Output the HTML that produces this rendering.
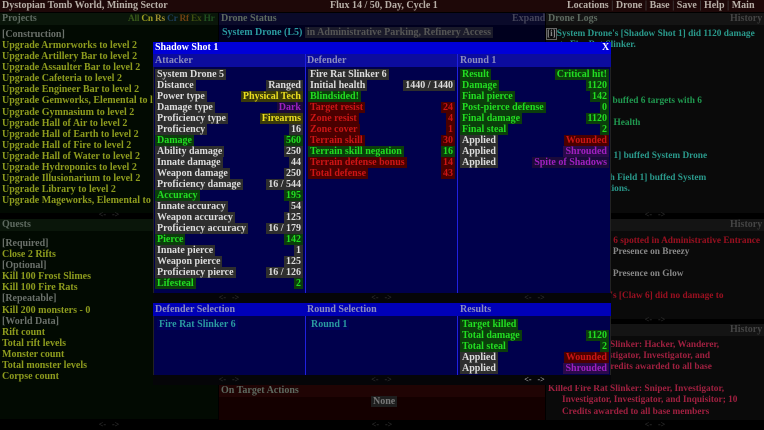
<!DOCTYPE html>
<html><head><meta charset="utf-8"><style>
*{margin:0;padding:0;box-sizing:border-box}
body{width:764px;height:430px;background:#000;overflow:hidden;position:relative;font-family:"Liberation Serif",serif;font-weight:bold;font-size:10px;line-height:11px}
.a{position:absolute;white-space:nowrap}
.g{color:#8e9c1e}
.t{color:#2a9a8c}
.gr{color:#6a706a}
.r{color:#9a1020}
.lg{color:#209a50}
.w{color:#888}
.hd{position:absolute;height:12px;color:#5e6a60;padding-left:2px;line-height:12px}
.nav{position:absolute;height:10px;font-size:8px;color:#333;text-align:center;line-height:10px}
.row{position:absolute;height:11px;line-height:11px}
.row span{padding:0 2px}
.l{background:#2e2e2e;color:#ddd}
.v{position:absolute;right:0;top:0}
.gl{background:#0b3e0b;color:#22dd22}
.rl{background:#4a0000;color:#cc1515}
.yl{background:#3a3a0a;color:#ecdf20}
.pu{color:#a020c0}
.mh{position:absolute;height:13px;line-height:13px;color:#8c8cc0;background:#0e0ea0;padding-left:2px}
.lgs{font-size:9.3px}
</style></head><body>
<!-- top bar -->
<div class="a" style="left:0;top:0;width:764px;height:12px;background:#1e0808"></div>
<div class="a" style="left:2px;top:0;color:#b8b0a8;line-height:12px">Dystopian Tomb World, Mining Sector</div>
<div class="a" style="left:330px;top:0;color:#b8b0a8;line-height:12px">Flux 14 / 50, Day, Cycle 1</div>
<div class="a" style="left:567px;top:0;color:#b8b0a8;line-height:12px">Locations <span style="color:#444">|</span> Drone <span style="color:#444">|</span> Base <span style="color:#444">|</span> Save <span style="color:#444">|</span> Help <span style="color:#444">|</span> Main</div>

<!-- projects panel -->
<div class="a" style="left:0;top:13px;width:218px;height:200px;background:#020a02"></div>
<div class="hd" style="left:0;top:13px;width:218px;background:#0a160a">Projects</div>
<div class="a" style="left:128px;top:13px;line-height:12px;font-size:9.3px;letter-spacing:-0.2px"><span style="color:#3a5a1a">All</span> <span style="color:#a0a020">Cn</span> <span style="color:#a09030">Rs</span> <span style="color:#204060">Cr</span> <span style="color:#704010">Rf</span> <span style="color:#405010">Ex</span> <span style="color:#205020">Hr</span></div>
<div class="a gr" style="left:2px;top:29px">[Construction]</div>
<div class="a g" style="left:2px;top:40px;line-height:11.1px">Upgrade Armorworks to level 2<br>Upgrade Artillery Bar to level 2<br>Upgrade Assaulter Bar to level 2<br>Upgrade Cafeteria to level 2<br>Upgrade Engineer Bar to level 2<br>Upgrade Gemworks, Elemental to level 2<br>Upgrade Gymnasium to level 2<br>Upgrade Hall of Air to level 2<br>Upgrade Hall of Earth to level 2<br>Upgrade Hall of Fire to level 2<br>Upgrade Hall of Water to level 2<br>Upgrade Hydroponics to level 2<br>Upgrade Illusionarium to level 2<br>Upgrade Library to level 2<br>Upgrade Mageworks, Elemental to level 2</div>
<div class="nav" style="left:0;top:210px;width:218px">&lt;- &nbsp; -&gt;</div>

<!-- quests -->
<div class="a" style="left:0;top:219px;width:218px;height:200px;background:#020a02"></div>
<div class="hd" style="left:0;top:219px;width:218px;background:#0a160a">Quests</div>
<div class="a" style="left:2px;top:238px;line-height:11.1px"><span class="gr">[Required]</span><br><span class="g">Close 2 Rifts</span><br><span class="gr">[Optional]</span><br><span class="g">Kill 100 Frost Slimes</span><br><span class="g">Kill 100 Fire Rats</span><br><span class="gr">[Repeatable]</span><br><span class="g">Kill 200 monsters - 0</span><br><span class="gr">[World Data]</span><br><span class="g">Rift count</span><br><span class="g">Total rift levels</span><br><span class="g">Monster count</span><br><span class="g">Total monster levels</span><br><span class="g">Corpse count</span></div>
<div class="nav" style="left:0;top:420px;width:218px">&lt;- &nbsp; -&gt;</div>

<!-- drone status -->
<div class="a" style="left:219px;top:13px;width:326px;height:372px;background:#00001e"></div>
<div class="hd" style="left:219px;top:13px;width:326px;background:#0a0a2a">Drone Status</div>
<div class="a" style="left:512px;top:13px;color:#44445a;line-height:12px">Expand</div>
<div class="a" style="left:222px;top:27px;color:#2a9aa0">System Drone (L5) <span style="background:#1a1a2a;color:#555;padding:0 2px">in Administrative Parking, Refinery Access</span></div>

<!-- on target actions -->
<div class="a" style="left:219px;top:385px;width:326px;height:35px;background:#140000"></div>
<div class="hd" style="left:219px;top:385px;width:326px;background:#200404">On Target Actions</div>
<div class="a" style="left:371px;top:396px;background:#1e1e1e;color:#777;padding:0 2px">None</div>
<div class="nav" style="left:219px;top:420px;width:326px">&lt;- &nbsp; -&gt;</div>

<!-- drone logs -->
<div class="a" style="left:546px;top:13px;width:218px;height:200px;background:#0a0a0a"></div>
<div class="hd" style="left:546px;top:13px;width:218px;background:#141414">Drone Logs</div>
<div class="a" style="left:730px;top:13px;color:#444;line-height:12px">History</div>
<div class="a lgs" style="left:546px;top:29px;line-height:11.1px"><span class="t"><span style="border:1px solid #666;color:#888">[i]</span>System Drone's [Shadow Shot 1] did 1120 damage</span><br><span class="t">&nbsp;&nbsp;&nbsp;&nbsp;&nbsp;&nbsp;to Fire Rat Slinker.</span><br><span class="lg">&nbsp;&nbsp;&nbsp;&nbsp;&nbsp;&nbsp;Pyrospores</span><br><span class="lg">&nbsp;&nbsp;&nbsp;&nbsp;&nbsp;&nbsp;Sneaking</span><br><span class="lg">&nbsp;&nbsp;&nbsp;&nbsp;&nbsp;&nbsp;Stealth Field</span><br><span class="r">&nbsp;&nbsp;&nbsp;&nbsp;&nbsp;&nbsp;Frosty</span><br><span class="lg">&nbsp;&nbsp;&nbsp;[Pyrospores 1] buffed 6 targets with 6</span><br><br><span class="lg">&nbsp;&nbsp;&nbsp;&nbsp;&nbsp;&nbsp;Restored 112 Health</span><br><br><span class="lg">&nbsp;&nbsp;&nbsp;&nbsp;&nbsp;&nbsp;Cooldown</span><br><span class="t">&nbsp;&nbsp;Drone's [Sneak 1] buffed System Drone</span><br><span class="t">&nbsp;&nbsp;&nbsp;&nbsp;&nbsp;&nbsp;conditions.</span><br><span class="t">&nbsp;&nbsp;Drone's [Stealth Field 1] buffed System</span><br><span class="t">&nbsp;&nbsp;&nbsp;&nbsp;&nbsp;&nbsp;with 1 conditions.</span></div>
<div class="nav" style="left:546px;top:210px;width:218px">&lt;- &nbsp; -&gt;</div>

<div class="a" style="left:546px;top:219px;width:218px;height:100px;background:#0a0a0a"></div>
<div class="hd" style="left:546px;top:219px;width:218px;background:#141414"></div>
<div class="a" style="left:730px;top:219px;color:#444;line-height:12px">History</div>
<div class="a lgs" style="right:4px;top:236px;line-height:11.1px;color:#9a1020">Fire Rat Slinker 6 spotted in Administrative Entrance</div>
<div class="a lgs" style="left:546px;top:247px;line-height:11.1px"><span class="w">Dealt damage to Presence on Breezy</span><br><span class="w">Breezys</span><br><span class="w">Dealt damage to Presence on Glow</span><br><span class="w">Glows</span><br><span class="r">Fire Rat Slinker's [Claw 6] did no damage to</span><br><span class="r">System Droner.</span></div>
<div class="nav" style="left:546px;top:315px;width:218px">&lt;- &nbsp; -&gt;</div>

<div class="a" style="left:546px;top:324px;width:218px;height:96px;background:#0a0a0a"></div>
<div class="hd" style="left:546px;top:324px;width:218px;background:#141414"></div>
<div class="a" style="left:730px;top:324px;color:#444;line-height:12px">History</div>
<div class="a lgs" style="left:548px;top:340px;line-height:11.1px;color:#a02040">Killed Fire Rat Slinker: Hacker, Wanderer,<br>&nbsp;&nbsp;&nbsp;&nbsp;&nbsp;&nbsp;Medic, Investigator, Investigator, and<br>&nbsp;&nbsp;&nbsp;&nbsp;&nbsp;&nbsp;Drone; 10 Credits awarded to all base<br><br>Killed Fire Rat Slinker: Sniper, Investigator,<br>&nbsp;&nbsp;&nbsp;&nbsp;&nbsp;&nbsp;Investigator, Investigator, and Inquisitor; 10<br>&nbsp;&nbsp;&nbsp;&nbsp;&nbsp;&nbsp;Credits awarded to all base members</div>
<div class="nav" style="left:546px;top:420px;width:218px">&lt;- &nbsp; -&gt;</div>

<!-- MODAL -->
<div class="a" style="left:153px;top:42px;width:458px;height:343px;background:#00004c;border:1px solid #222"></div>
<div class="a" style="left:153px;top:42px;width:458px;height:12px;background:#0000d8;color:#fff;padding-left:2px;line-height:12px">Shadow Shot 1</div>
<div class="a" style="left:602px;top:42px;color:#fff;line-height:12px">X</div>
<div class="mh" style="left:153px;top:54px;width:458px;background:#0c0c9e">Attacker</div>
<div class="a" style="left:307px;top:54px;color:#8c8cc0;line-height:13px">Defender</div>
<div class="a" style="left:460px;top:54px;color:#8c8cc0;line-height:13px">Round 1</div>
<div class="a" style="left:305px;top:54px;width:1px;height:331px;background:#2020e0"></div>
<div class="a" style="left:457px;top:54px;width:1px;height:331px;background:#2020e0"></div>
<div class="a" style="left:153px;top:293px;width:458px;height:10px;background:#050508"></div>
<div class="nav" style="left:153px;top:293px;width:152px">&lt;- &nbsp; -&gt;</div>
<div class="nav" style="left:306px;top:293px;width:151px">&lt;- &nbsp; -&gt;</div>
<div class="nav" style="left:458px;top:293px;width:153px">&lt;- &nbsp; -&gt;</div>
<div class="mh" style="left:153px;top:303px;width:458px;background:#0000b8">Defender Selection</div>
<div class="a" style="left:307px;top:303px;color:#8c8cc0;line-height:13px">Round Selection</div>
<div class="a" style="left:460px;top:303px;color:#8c8cc0;line-height:13px">Results</div>
<div class="a" style="left:153px;top:375px;width:458px;height:10px;background:#050508"></div>
<div class="nav" style="left:153px;top:375px;width:152px">&lt;- &nbsp; -&gt;</div>
<div class="nav" style="left:306px;top:375px;width:151px">&lt;- &nbsp; -&gt;</div>
<div class="nav" style="left:458px;top:375px;width:153px;color:#aaa">&lt;- &nbsp; -&gt;</div>
<div class="a" style="left:305px;top:293px;width:1px;height:10px;background:#050508"></div>
<div class="a" style="left:457px;top:293px;width:1px;height:10px;background:#050508"></div>

<!-- attacker rows -->
<div class="a" style="left:155px;top:69px;width:148px;line-height:11.15px">
<div class="row" style="position:relative;width:148px"><span class="l">System Drone 5</span></div>
<div class="row" style="position:relative;width:148px"><span class="l">Distance</span><span class="v l">Ranged</span></div>
<div class="row" style="position:relative;width:148px"><span class="l">Power type</span><span class="v yl">Physical Tech</span></div>
<div class="row" style="position:relative;width:148px"><span class="l">Damage type</span><span class="v pu" style="background:#1a0a3a">Dark</span></div>
<div class="row" style="position:relative;width:148px"><span class="l">Proficiency type</span><span class="v yl">Firearms</span></div>
<div class="row" style="position:relative;width:148px"><span class="l">Proficiency</span><span class="v l">16</span></div>
<div class="row" style="position:relative;width:148px"><span class="gl">Damage</span><span class="v gl">560</span></div>
<div class="row" style="position:relative;width:148px"><span class="l">Ability damage</span><span class="v l">250</span></div>
<div class="row" style="position:relative;width:148px"><span class="l">Innate damage</span><span class="v l">44</span></div>
<div class="row" style="position:relative;width:148px"><span class="l">Weapon damage</span><span class="v l">250</span></div>
<div class="row" style="position:relative;width:148px"><span class="l">Proficiency damage</span><span class="v l">16 / 544</span></div>
<div class="row" style="position:relative;width:148px"><span class="gl">Accuracy</span><span class="v gl">195</span></div>
<div class="row" style="position:relative;width:148px"><span class="l">Innate accuracy</span><span class="v l">54</span></div>
<div class="row" style="position:relative;width:148px"><span class="l">Weapon accuracy</span><span class="v l">125</span></div>
<div class="row" style="position:relative;width:148px"><span class="l">Proficiency accuracy</span><span class="v l">16 / 179</span></div>
<div class="row" style="position:relative;width:148px"><span class="gl">Pierce</span><span class="v gl">142</span></div>
<div class="row" style="position:relative;width:148px"><span class="l">Innate pierce</span><span class="v l">1</span></div>
<div class="row" style="position:relative;width:148px"><span class="l">Weapon pierce</span><span class="v l">125</span></div>
<div class="row" style="position:relative;width:148px"><span class="l">Proficiency pierce</span><span class="v l">16 / 126</span></div>
<div class="row" style="position:relative;width:148px"><span class="gl">Lifesteal</span><span class="v gl">2</span></div>
</div>

<!-- defender rows -->
<div class="a" style="left:308px;top:69px;width:147px">
<div class="row" style="position:relative;width:147px"><span class="l">Fire Rat Slinker 6</span></div>
<div class="row" style="position:relative;width:147px"><span class="l">Initial health</span><span class="v l">1440 / 1440</span></div>
<div class="row" style="position:relative;width:147px"><span class="gl">Blindsided!</span></div>
<div class="row" style="position:relative;width:147px"><span class="rl">Target resist</span><span class="v rl">24</span></div>
<div class="row" style="position:relative;width:147px"><span class="rl">Zone resist</span><span class="v rl">4</span></div>
<div class="row" style="position:relative;width:147px"><span class="rl">Zone cover</span><span class="v rl">1</span></div>
<div class="row" style="position:relative;width:147px"><span class="rl">Terrain skill</span><span class="v rl">30</span></div>
<div class="row" style="position:relative;width:147px"><span class="gl">Terrain skill negation</span><span class="v gl">16</span></div>
<div class="row" style="position:relative;width:147px"><span class="rl">Terrain defense bonus</span><span class="v rl">14</span></div>
<div class="row" style="position:relative;width:147px"><span class="rl">Total defense</span><span class="v rl">43</span></div>
</div>

<!-- round rows -->
<div class="a" style="left:460px;top:69px;width:149px">
<div class="row" style="position:relative;width:149px"><span class="gl">Result</span><span class="v gl">Critical hit!</span></div>
<div class="row" style="position:relative;width:149px"><span class="gl">Damage</span><span class="v gl">1120</span></div>
<div class="row" style="position:relative;width:149px"><span class="gl">Final pierce</span><span class="v gl">142</span></div>
<div class="row" style="position:relative;width:149px"><span class="gl">Post-pierce defense</span><span class="v gl">0</span></div>
<div class="row" style="position:relative;width:149px"><span class="gl">Final damage</span><span class="v gl">1120</span></div>
<div class="row" style="position:relative;width:149px"><span class="gl">Final steal</span><span class="v gl">2</span></div>
<div class="row" style="position:relative;width:149px"><span class="l">Applied</span><span class="v rl">Wounded</span></div>
<div class="row" style="position:relative;width:149px"><span class="l">Applied</span><span class="v pu" style="background:#2a0a4a">Shrouded</span></div>
<div class="row" style="position:relative;width:149px"><span class="l">Applied</span><span class="v pu" style="background:#1a0a3a">Spite of Shadows</span></div>
</div>

<!-- bottom section -->
<div class="a" style="left:157px;top:319px;color:#2a9aa0;background:#00005a;padding:0 2px">Fire Rat Slinker 6</div>
<div class="a" style="left:309px;top:319px;color:#2a9aa0;background:#00005a;padding:0 2px">Round 1</div>
<div class="a" style="left:460px;top:319px;width:149px">
<div class="row" style="position:relative;width:149px"><span class="gl">Target killed</span></div>
<div class="row" style="position:relative;width:149px"><span class="gl">Total damage</span><span class="v gl">1120</span></div>
<div class="row" style="position:relative;width:149px"><span class="gl">Total steal</span><span class="v gl">2</span></div>
<div class="row" style="position:relative;width:149px"><span class="l">Applied</span><span class="v rl">Wounded</span></div>
<div class="row" style="position:relative;width:149px"><span class="l">Applied</span><span class="v pu" style="background:#2a0a4a">Shrouded</span></div>
</div>
</body></html>
